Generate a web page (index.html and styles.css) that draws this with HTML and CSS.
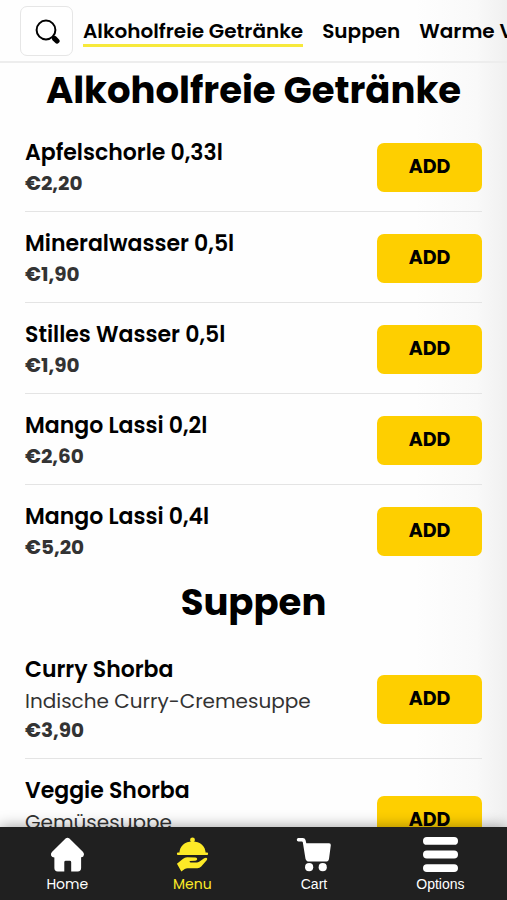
FILE: index.html
```html
<!DOCTYPE html>
<html lang="de">
<head>
<meta charset="utf-8">
<meta name="viewport" content="width=device-width, initial-scale=1">
<title>Speisekarte</title>
<link rel="stylesheet" href="styles.css">
</head>
<body>
<header class="topbar">
  <button class="search" type="button" aria-label="Suche">
    <svg viewBox="-1 -1 26 26" width="26" height="26" aria-hidden="true"><circle cx="11" cy="11" r="9.400" fill="none" stroke="#000" stroke-width="2"/><path d="M17.500 17.500 19.500 19.500" stroke="#000" stroke-width="2.500"/><path d="M19.600 19.600 22 22" stroke="#000" stroke-width="5.200" stroke-linecap="round"/></svg>
  </button>
  <nav class="categories" aria-label="Kategorien">
    <a class="category active" href="#getraenke">Alkoholfreie Getränke</a>
    <a class="category" href="#suppen">Suppen</a>
    <a class="category" href="#vorspeisen">Warme Vorspeisen</a>
  </nav>
</header>
<main class="menu">
  <section id="getraenke">
    <h2>Alkoholfreie Getränke</h2>
    <ul class="items">
      <li class="item"><div><h3>Apfelschorle 0,33l</h3><p class="price">€2,20</p></div><button class="add" type="button">ADD</button></li>
      <li class="item"><div><h3>Mineralwasser 0,5l</h3><p class="price">€1,90</p></div><button class="add" type="button">ADD</button></li>
      <li class="item"><div><h3>Stilles Wasser 0,5l</h3><p class="price">€1,90</p></div><button class="add" type="button">ADD</button></li>
      <li class="item"><div><h3>Mango Lassi 0,2l</h3><p class="price">€2,60</p></div><button class="add" type="button">ADD</button></li>
      <li class="item"><div><h3>Mango Lassi 0,4l</h3><p class="price">€5,20</p></div><button class="add" type="button">ADD</button></li>
    </ul>
  </section>
  <section id="suppen">
    <h2>Suppen</h2>
    <ul class="items">
      <li class="item"><div><h3>Curry Shorba</h3><p class="description">Indische Curry-Cremesuppe</p><p class="price">€3,90</p></div><button class="add" type="button">ADD</button></li>
      <li class="item"><div><h3>Veggie Shorba</h3><p class="description">Gemüsesuppe</p><p class="price">€3,90</p></div><button class="add" type="button">ADD</button></li>
    </ul>
  </section>
</main>
<nav class="tabbar" aria-label="Navigation">
  <a class="tab" href="#home">
    <svg viewBox="0 0 36 36" width="35" height="35" aria-hidden="true"><path fill="currentColor" d="M16 1.600q2-1.500 4 0L34 15.500q2 2.300.4 4.400-.8 1-2.400 1V32q0 3.500-3.500 3.500h-6.700V26q0-1.500-1.500-1.500h-4.100q-1.500 0-1.500 1.500v9.500H8Q4.500 35.500 4.500 32V21Q2 21 1.200 19.200.4 17.300 2 15.500Z"/></svg>
    <span>Home</span>
  </a>
  <a class="tab active" href="#menu" aria-current="page">
    <svg viewBox="0 0 36 36" width="35" height="35" aria-hidden="true"><g fill="currentColor"><circle cx="18" cy="3" r="2.500"/><path d="M4.500 17C4.500 9 10 4.500 18 4.500S31.500 9 31.500 17Z"/><rect x="2" y="16" width="32" height="2.400" rx="1"/><path d="M2 27.500 8 22.500q2-1.700 4.500-1.700l8.500.2q2 .2 1.800 1.800-.2 1.400-2 1.500l-5 .3q-1 .3-.8.9.2.600 1.200.6h6.500q1.800-.1 3.300-1.300l4-2.900q1.500-.9 2.800-.3.900.9-.2 2.300l-5.600 6.500q-1.700 1.700-4 1.800H13q-1.700 0-3 .8L6.500 35.500Z"/></g></svg>
    <span>Menu</span>
  </a>
  <a class="tab plain" href="#cart">
    <svg viewBox="0 0 36 36" width="35" height="35" aria-hidden="true"><g fill="currentColor"><path d="M2.500 1H7q2.200 0 2.800 2.200L10.600 6.500H34q2 0 1.800 2L34 22q-.4 3.300-3.700 3.300H13.500q-3.200 0-3.800-3.200L7 5.500Q6.800 4.600 6 4.600H2.500Q.8 4.500.8 2.800.8 1 2.500 1Z"/><circle cx="13.500" cy="31" r="4.200"/><circle cx="27.500" cy="31" r="4.200"/></g></svg>
    <span>Cart</span>
  </a>
  <a class="tab plain" href="#options">
    <svg viewBox="0 0 36 36" width="35" height="35" aria-hidden="true"><g fill="currentColor"><rect x="0" y="0" width="36" height="8" rx="4"/><rect x="0" y="14" width="36" height="8" rx="4"/><rect x="0" y="28" width="36" height="8" rx="4"/></g></svg>
    <span>Options</span>
  </a>
</nav>
</body>
</html>
```

FILE: styles.css
```css
* {
  box-sizing: border-box;
}

body {
  display: flex;
  flex-direction: column;
  height: 100vh;
  margin: 0;
  overflow: hidden;
  background: linear-gradient(to right, #fefefe 82%, #f9f9f9 94%, #f0f0f0 100%);
  color: #000;
  font-family: Poppins, Inter, sans-serif;
}

h2,
h3,
p,
ul {
  margin: 0;
  padding: 0;
}

a {
  color: inherit;
  text-decoration: none;
}

.topbar {
  display: flex;
  flex: none;
  align-items: center;
  gap: 10px;
  padding: 6px 0 5px 20px;
  border-bottom: 2px solid #ededed;
}

.search {
  display: flex;
  flex: none;
  align-items: center;
  justify-content: center;
  width: 53px;
  height: 50px;
  padding: 0;
  border: 1px solid #e6e6e6;
  border-radius: 7px;
  background: #fff;
}

.categories {
  display: flex;
  gap: 19px;
  overflow: hidden;
  white-space: nowrap;
}

.category {
  flex: none;
  padding-top: 2px;
  border-bottom: 3px solid transparent;
  font-size: 20px;
  font-weight: 600;
  line-height: 26px;
}

.category.active {
  border-color: #f7e93b;
}

.menu {
  flex: 1;
  min-height: 0;
  padding: 0 25px;
  overflow-y: auto;
  scrollbar-width: none;
}

h2 {
  padding-bottom: 4px;
  font-size: 37px;
  font-weight: 700;
  line-height: 54px;
  text-align: center;
}

section + section h2 {
  padding-bottom: 9px;
}

.items {
  list-style: none;
}

.item {
  display: flex;
  align-items: center;
  justify-content: space-between;
  padding: 16px 0 14px;
}

.item + .item {
  border-top: 1px solid #e4e4e4;
}

h3 {
  font-size: 22px;
  font-weight: 600;
  line-height: 32px;
}

.description {
  color: #333;
  font-size: 20px;
  line-height: 30px;
}

.price {
  color: #333;
  font-size: 20px;
  font-weight: 700;
  line-height: 28px;
}

.add {
  width: 105px;
  height: 49px;
  border: 0;
  border-radius: 7px;
  background: #fecf00;
  color: #000;
  font: 700 19px/28px Poppins, Inter, sans-serif;
}

.tabbar {
  z-index: 1;
  display: flex;
  flex: none;
  justify-content: space-around;
  padding: 10px 0 6px 4px;
  background: #202020;
  box-shadow: 0 0 14px rgba(0, 0, 0, 0.4);
  color: #fff;
}

.tab {
  display: flex;
  flex-direction: column;
  align-items: center;
  gap: 2px;
  font-size: 14px;
  line-height: 20px;
}

.tab.active {
  color: #fdea27;
}

.tab.plain {
  font-family: "Liberation Sans", Arial, sans-serif;
}
```
